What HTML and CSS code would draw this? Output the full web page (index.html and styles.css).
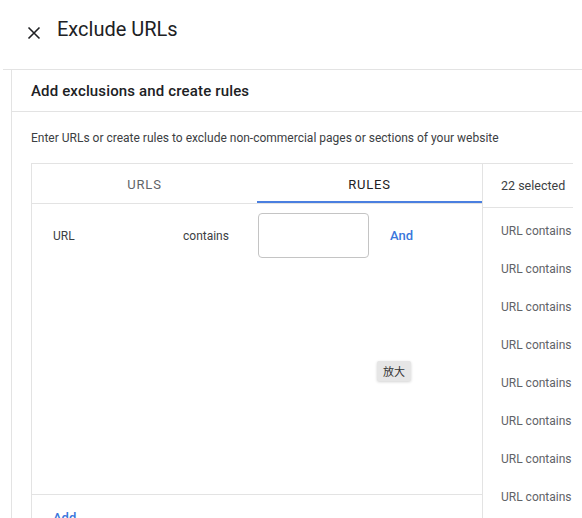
FILE: index.html
```html
<!DOCTYPE html>
<html>
<head>
<meta charset="utf-8">
<link rel="stylesheet" href="styles.css">
</head>
<body>
<div class="page">
  <header class="topbar">
    <svg class="close" width="14" height="14" viewBox="0 0 14 14"><path d="M1.5 1.5 L12.5 12.5 M12.5 1.5 L1.5 12.5" stroke="#202124" stroke-width="1.6" fill="none"/></svg>
    <h1 class="title">Exclude URLs</h1>
  </header>
  <section class="card">
    <div class="card-head">Add exclusions and create rules</div>
    <p class="desc">Enter URLs or create rules to exclude non-commercial pages or sections of your website</p>
    <div class="table">
      <div class="editor">
        <div class="tabs">
          <div class="tab">URLS</div>
          <div class="tab active">RULES</div>
        </div>
        <div class="rules">
          <div class="rule">
            <span class="field">URL</span>
            <span class="op">contains</span>
            <div class="input"></div>
            <span class="and">And</span>
          </div>
        </div>
        <div class="add-row"><span class="add">Add</span></div>
      </div>
      <div class="selected">
        <div class="sel-head">22 selected</div>
        <ul class="sel-list">
          <li>URL contains</li>
          <li>URL contains</li>
          <li>URL contains</li>
          <li>URL contains</li>
          <li>URL contains</li>
          <li>URL contains</li>
          <li>URL contains</li>
          <li>URL contains</li>
        </ul>
      </div>
    </div>
  </section>
  <div class="tooltip">放大</div>
</div>
</body>
</html>
```
FILE: styles.css
```css
* { box-sizing: border-box; }
html, body { margin: 0; padding: 0; background: #fff; }
body {
  font-family: Roboto, "Noto Sans CJK SC", sans-serif;
  color: #202124;
  width: 582px;
  height: 518px;
  overflow: hidden;
}
.page { position: relative; width: 582px; height: 518px; overflow: hidden; }
.topbar {
  height: 70px;
  margin-left: 3px;
  border-bottom: 1px solid #e3e3e3;
  display: flex;
  align-items: center;
  padding-left: 24px;
  padding-bottom: 12px;
}
.close { display: block; margin-top: 8px; }
.title {
  margin: 0 0 0 16px;
  font-weight: 400;
  font-size: 20px;
  color: #202124;
}
.card {
  margin-left: 11px;
  border-left: 1px solid #e3e3e3;
  height: 448px;
}
.card-head {
  height: 42px;
  border-bottom: 1px solid #e3e3e3;
  padding-left: 19px;
  padding-top: 12px;
  font-size: 15px;
  font-weight: 500;
  letter-spacing: 0.15px;
  color: #202124;
}
.desc {
  margin: 0;
  padding: 19px 0 0 19px;
  height: 51px;
  font-size: 12px;
  color: #3c4043;
}
.table {
  margin-left: 19px;
  width: 542px;
  border-top: 1px solid #e3e3e3;
  border-left: 1px solid #e3e3e3;
  display: flex;
  height: 400px;
}
.editor {
  width: 451px;
  border-right: 1px solid #e3e3e3;
  display: flex;
  flex-direction: column;
}
.tabs {
  display: flex;
  height: 40px;
  border-bottom: 1px solid #e3e3e3;
}
.tab {
  flex: 1;
  display: flex;
  align-items: center;
  justify-content: center;
  font-size: 13px;
  color: #5f6368;
  letter-spacing: 0.8px;
  padding-top: 2px;
}
.tab.active {
  color: #202124;
  box-shadow: inset 0 -2px 0 #4a7fe0;
}
.rules {
  height: 291px;
  border-bottom: 1px solid #e3e3e3;
  padding: 9px 0 0 21px;
}
.rule {
  display: flex;
  align-items: center;
  height: 45px;
  font-size: 12px;
  color: #3c4043;
}
.field { width: 130px; }
.op { width: 75px; }
.input {
  width: 111px;
  height: 45px;
  border: 1px solid #c4c4c4;
  border-radius: 4px;
}
.and {
  margin-left: 21px;
  color: #3a77dc;
  font-size: 13px;
  font-weight: 500;
}
.add-row { padding: 12px 0 0 21px; }
.add { color: #3a77dc; font-size: 13px; font-weight: 500; }
.selected { width: 90px; }
.sel-head {
  height: 44px;
  border-bottom: 1px solid #e3e3e3;
  padding-left: 18px;
  display: flex;
  align-items: center;
  font-size: 12.5px;
  color: #3c4043;
  white-space: nowrap;
}
.sel-list {
  list-style: none;
  margin: 0;
  padding: 4px 0 0 18px;
}
.sel-list li {
  height: 38px;
  display: flex;
  align-items: center;
  font-size: 12px;
  color: #5f6368;
  white-space: nowrap;
}
.tooltip {
  position: absolute;
  left: 377px;
  top: 361px;
  width: 34px;
  height: 20px;
  background: #e6e6e6;
  box-shadow: 0 1px 3px rgba(0,0,0,0.18);
  border-radius: 2px;
  font-size: 11px;
  color: #333;
  display: flex;
  align-items: center;
  justify-content: center;
  font-family: "Noto Sans CJK SC", sans-serif;
}
```
